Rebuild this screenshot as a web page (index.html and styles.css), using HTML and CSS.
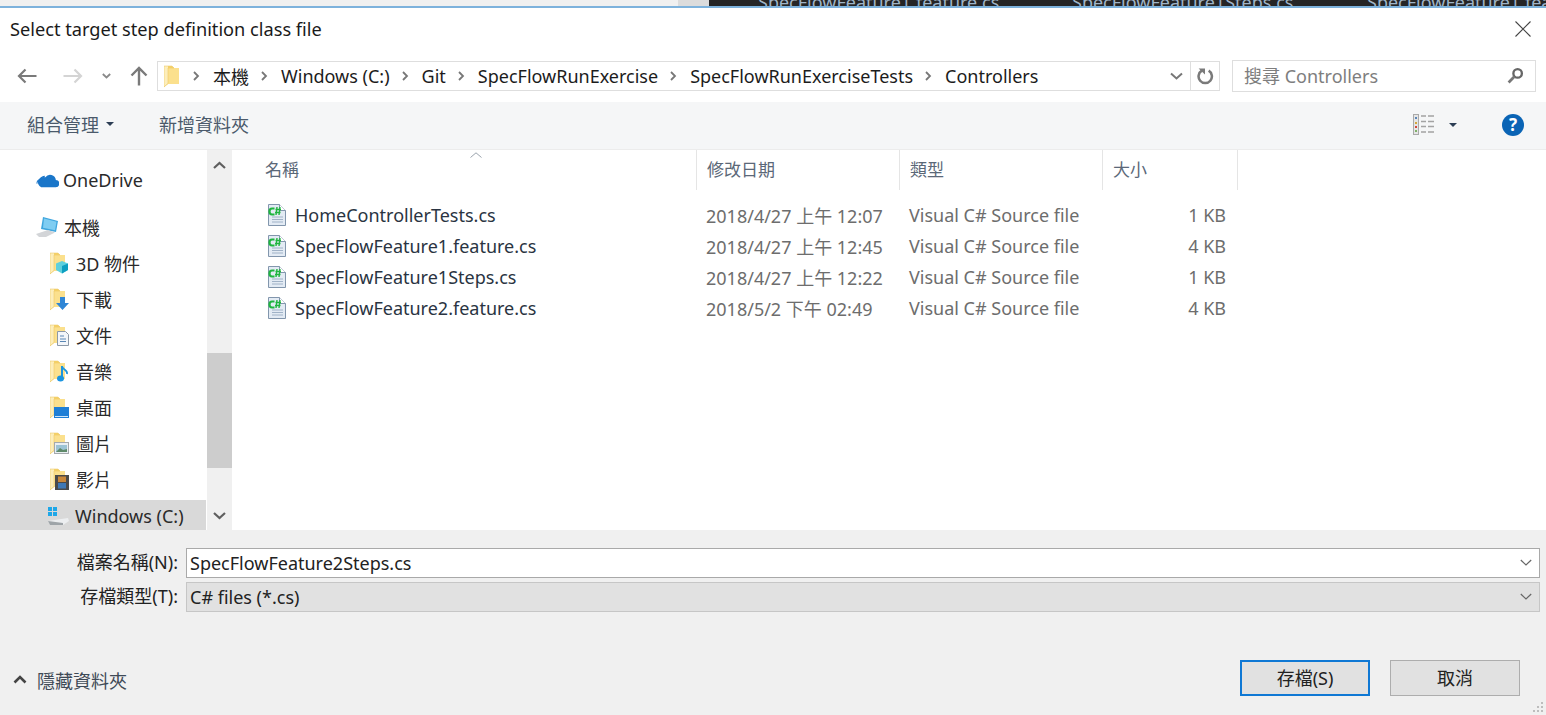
FILE: index.html
```html
<!DOCTYPE html>
<html lang="zh-Hant">
<head>
<meta charset="utf-8">
<title>Select target step definition class file</title>
<link rel="stylesheet" href="styles.css">
</head>
<body>
<svg class="defs" width="0" height="0" aria-hidden="true">
  <defs>
    <symbol id="folder" viewBox="0 0 15 23">
      <path d="M0 1h8l2 2h5v16H4l-4 3z" fill="#f6d36c"/>
      <path d="M4 3h11v16H4z" fill="#fbe08d"/>
      <path d="M0 1h4v17.500L0 22z" fill="#fdeebb"/>
      <path d="M0 1h8l2 2H4v15.500L0 22z" fill="none" stroke="#e9c25a" stroke-width=".5"/>
    </symbol>
    <symbol id="csfile" viewBox="0 0 20 24">
      <path d="M1.500 1.500h11l6 6v15h-17z" fill="#e3ebf4" stroke="#8296ad"/>
      <path d="M12.500 1.500v6h6" fill="#fff" stroke="#8296ad"/>
      <path d="M5 14h11M5 16.500h11M5 19h11" stroke="#a0b2c7"/>
      <path d="M7.500 5.500H5Q2.500 5.500 2.500 8.500T5 11.500h2.500" fill="none" stroke="#1fb53f" stroke-width="2.200"/>
      <path d="M10 4l-1 8M13 4l-1 8M8.500 6.500h5.500M8 9.500h5.500" stroke="#1fb53f" stroke-width="1.400"/>
    </symbol>
  </defs>
</svg>
<div class="window">
  <div class="strip">
    <div class="strip-light"></div>
    <div class="strip-mid"></div>
    <div class="strip-dark">
      <span class="tab tab-a">SpecFlowFeature1.feature.cs</span>
      <span class="tab tab-b">SpecFlowFeature1Steps.cs</span>
      <span class="tab tab-c">SpecFlowFeature1.feature.cs</span>
    </div>
  </div>

  <header class="titlebar">
    <span class="title">Select target step definition class file</span>
    <svg class="close" width="16" height="16" viewBox="0 0 16 16"><path d="M.5.500l15 15M15.500.500l-15 15" stroke="#444" stroke-width="1.100" fill="none"/></svg>
  </header>

  <nav class="navbar">
    <div class="nav-buttons">
      <svg class="nav-back" width="20" height="16" viewBox="0 0 20 16"><path d="M1.500 8h18M8.500 1.500L2 8l6.500 6.500" stroke="#7a7a7a" stroke-width="2.200" fill="none"/></svg>
      <svg class="nav-fwd" width="20" height="16" viewBox="0 0 20 16"><path d="M18.500 8H.5M11.500 1.500L18 8l-6.500 6.500" stroke="#d4d4d4" stroke-width="2.200" fill="none"/></svg>
      <svg class="nav-recent" width="9" height="6" viewBox="0 0 9 6"><path d="M.8 1l3.700 3.500L8.200 1" stroke="#8a8a8a" stroke-width="1.800" fill="none"/></svg>
      <svg class="nav-up" width="18" height="20" viewBox="0 0 18 20"><path d="M9 19.500V2M1.500 9.500L9 2l7.500 7.500" stroke="#7a7a7a" stroke-width="2.400" fill="none"/></svg>
    </div>
    <div class="address">
      <svg class="addr-folder" width="15" height="23"><use href="#folder"/></svg>
      <svg class="crumb-sep" width="7" height="10" viewBox="0 0 7 10"><path d="M1 1l4 4-4 4" stroke="#777" stroke-width="1.800" fill="none"/></svg>
      <span class="crumb">本機</span>
      <svg class="crumb-sep" width="7" height="10" viewBox="0 0 7 10"><path d="M1 1l4 4-4 4" stroke="#777" stroke-width="1.800" fill="none"/></svg>
      <span class="crumb">Windows (C:)</span>
      <svg class="crumb-sep" width="7" height="10" viewBox="0 0 7 10"><path d="M1 1l4 4-4 4" stroke="#777" stroke-width="1.800" fill="none"/></svg>
      <span class="crumb">Git</span>
      <svg class="crumb-sep" width="7" height="10" viewBox="0 0 7 10"><path d="M1 1l4 4-4 4" stroke="#777" stroke-width="1.800" fill="none"/></svg>
      <span class="crumb">SpecFlowRunExercise</span>
      <svg class="crumb-sep" width="7" height="10" viewBox="0 0 7 10"><path d="M1 1l4 4-4 4" stroke="#777" stroke-width="1.800" fill="none"/></svg>
      <span class="crumb">SpecFlowRunExerciseTests</span>
      <svg class="crumb-sep" width="7" height="10" viewBox="0 0 7 10"><path d="M1 1l4 4-4 4" stroke="#777" stroke-width="1.800" fill="none"/></svg>
      <span class="crumb">Controllers</span>
      <svg class="addr-drop" width="13" height="8" viewBox="0 0 13 8"><path d="M1 1.500l5.500 5 5.500-5" stroke="#777" stroke-width="2" fill="none"/></svg>
      <div class="addr-refresh">
        <svg width="17" height="18" viewBox="0 0 16 17"><path d="M4.500 3.500A6.300 6.300 0 1 0 11 3.500" stroke="#7a7a7a" stroke-width="2.400" fill="none"/><path d="M1.500 1.500h6v5.500z" fill="#7a7a7a"/></svg>
      </div>
    </div>
    <div class="search">
      <span class="search-text">搜尋 Controllers</span>
      <svg width="17" height="17" viewBox="0 0 16 16"><circle cx="10" cy="6" r="4" stroke="#666" stroke-width="2.200" fill="none"/><path d="M7 9l-5.500 5.500" stroke="#777" stroke-width="2.600"/></svg>
    </div>
  </nav>

  <div class="toolbar">
    <span class="tool">組合管理<i class="caret"></i></span>
    <span class="tool tool-new">新增資料夾</span>
    <span class="spacer"></span>
    <svg class="view-icon" width="22" height="21" viewBox="0 0 22 21">
      <rect x=".5" y=".5" width="5" height="20" fill="#e6e6e6" stroke="#a9a9a9"/>
      <rect x="2" y="3" width="2" height="2" fill="#5c86b8"/><rect x="2" y="8" width="2" height="2" fill="#d3a63c"/><rect x="2" y="12" width="2" height="2" fill="#d2453c"/><rect x="2" y="16" width="2" height="2" fill="#7fb069"/>
      <path d="M8 2h5M15 2h6M8 7.500h5M15 7.500h6M8 12.500h5M15 12.500h6M8 18h5M15 18h6" stroke="#a3a3a3" stroke-width="1.400"/>
    </svg>
    <i class="caret caret-view"></i>
    <span class="help">?</span>
  </div>

  <main class="body">
    <aside class="sidebar">
      <ul class="tree">
        <li class="node node-top">
          <svg width="23" height="15" viewBox="0 0 22 14"><path d="M5 13.500h13.500a3.500 3.500 0 0 0 .5-7A5.500 5.500 0 0 0 9 4 4.500 4.500 0 0 0 5 13.500z" fill="#1a76c9"/><path d="M1 10a3.500 3.500 0 0 1 3-4 5 5 0 0 1 4.500-3" stroke="#1a76c9" fill="none"/></svg>
          <span>OneDrive</span>
        </li>
        <li class="node node-pc">
          <svg width="24" height="22" viewBox="0 0 24 22"><path d="M8 1l15 4-2 11-15-3z" fill="#3fa6de"/><path d="M9 2.500l12.500 3.300-1.500 8.500-12-2.500z" fill="#7fcdf2"/><path d="M1 18l12-4 7 2.500-9 4.500H4z" fill="#d3d5d8"/></svg>
          <span>本機</span>
        </li>
        <li class="node node-sub">
          <span class="ficon"><svg width="15" height="23"><use href="#folder"/></svg>
            <svg class="badge" width="14" height="14" viewBox="0 0 14 14"><path d="M7 1l6 2.500V10l-6 3.500L1 10V3.500z" fill="#5fd0dd"/><path d="M7 6v7.500l6-3.500V3.500z" fill="#0e9fc1"/></svg></span>
          <span>3D 物件</span>
        </li>
        <li class="node node-sub">
          <span class="ficon"><svg width="15" height="23"><use href="#folder"/></svg>
            <svg class="badge" width="13" height="14" viewBox="0 0 13 14"><path d="M4 1h5v6h4l-6.500 7L0 7h4z" fill="#2f86d6"/></svg></span>
          <span>下載</span>
        </li>
        <li class="node node-sub">
          <span class="ficon"><svg width="15" height="23"><use href="#folder"/></svg>
            <svg class="badge" width="12" height="15" viewBox="0 0 12 15"><path d="M.5.500h8l3 3v11H.5z" fill="#f3f6fa" stroke="#8c99a8"/><path d="M3 5h4M3 8h6M3 10.500h6" stroke="#5a87b5"/></svg></span>
          <span>文件</span>
        </li>
        <li class="node node-sub">
          <span class="ficon"><svg width="15" height="23"><use href="#folder"/></svg>
            <svg class="badge" width="12" height="17" viewBox="0 0 12 17"><path d="M5 1v12" stroke="#1b95e0" stroke-width="2"/><path d="M5 1c0 4 6 3 5 8" stroke="#1b95e0" stroke-width="1.800" fill="none"/><ellipse cx="3.500" cy="13.500" rx="3.500" ry="3" fill="#1b95e0"/></svg></span>
          <span>音樂</span>
        </li>
        <li class="node node-sub">
          <span class="ficon"><svg width="15" height="23"><use href="#folder"/></svg>
            <svg class="badge" width="15" height="11" viewBox="0 0 15 11"><rect width="15" height="11" fill="#1f7fd6"/><rect x="1" y="9" width="13" height="1" fill="#cfe6f8"/></svg></span>
          <span>桌面</span>
        </li>
        <li class="node node-sub">
          <span class="ficon"><svg width="15" height="23"><use href="#folder"/></svg>
            <svg class="badge" width="15" height="12" viewBox="0 0 15 12"><rect x=".5" y=".5" width="14" height="11" fill="#e9eef2" stroke="#a4a9ad"/><rect x="2" y="3" width="11" height="7" fill="#9cc3d5"/><path d="M2 10l4-4 3 2 4-1v3z" fill="#5f8a6a"/></svg></span>
          <span>圖片</span>
        </li>
        <li class="node node-sub">
          <span class="ficon"><svg width="15" height="23"><use href="#folder"/></svg>
            <svg class="badge" width="14" height="15" viewBox="0 0 14 15"><rect width="14" height="15" fill="#4a4a4a"/><rect x="3" y="1.500" width="8" height="5.500" fill="#c9873a"/><rect x="3" y="8" width="8" height="5.500" fill="#3f78b5"/></svg></span>
          <span>影片</span>
        </li>
        <li class="node node-drive">
          <svg width="23" height="20" viewBox="0 0 23 20"><path d="M1 15l20-3 1 3-6 4H3z" fill="#eceef0"/><path d="M1 15l2 4h13v-2z" fill="#9ea4a8"/><path d="M1 1h4v4H1zM6 1h4v4H6zM1 6h4v4H1zM6 6h4v4H6z" fill="#1ea7e8"/></svg>
          <span>Windows (C:)</span>
        </li>
      </ul>
      <div class="scrollbar">
        <svg class="sb-btn sb-up" width="13" height="8" viewBox="0 0 13 8"><path d="M1 7l5.500-5 5.500 5" stroke="#5f5f5f" stroke-width="2.200" fill="none"/></svg>
        <div class="sb-thumb"></div>
        <svg class="sb-btn sb-down" width="13" height="8" viewBox="0 0 13 8"><path d="M1 1l5.500 5 5.500-5" stroke="#5f5f5f" stroke-width="2.200" fill="none"/></svg>
      </div>
    </aside>

    <section class="files">
      <div class="file-grid">
        <div class="head head-name">名稱<svg class="sort" width="12" height="6" viewBox="0 0 12 6"><path d="M.5 5.500L6 .8l5.500 4.700" stroke="#9aa3ad" fill="none"/></svg></div>
        <div class="head">修改日期</div>
        <div class="head">類型</div>
        <div class="head">大小</div>

        <div class="cell name"><svg width="20" height="24"><use href="#csfile"/></svg>HomeControllerTests.cs</div>
        <div class="cell meta">2018/4/27 上午 12:07</div>
        <div class="cell meta">Visual C# Source file</div>
        <div class="cell meta size">1 KB</div>

        <div class="cell name"><svg width="20" height="24"><use href="#csfile"/></svg>SpecFlowFeature1.feature.cs</div>
        <div class="cell meta">2018/4/27 上午 12:45</div>
        <div class="cell meta">Visual C# Source file</div>
        <div class="cell meta size">4 KB</div>

        <div class="cell name"><svg width="20" height="24"><use href="#csfile"/></svg>SpecFlowFeature1Steps.cs</div>
        <div class="cell meta">2018/4/27 上午 12:22</div>
        <div class="cell meta">Visual C# Source file</div>
        <div class="cell meta size">1 KB</div>

        <div class="cell name"><svg width="20" height="24"><use href="#csfile"/></svg>SpecFlowFeature2.feature.cs</div>
        <div class="cell meta">2018/5/2 下午 02:49</div>
        <div class="cell meta">Visual C# Source file</div>
        <div class="cell meta size">4 KB</div>
      </div>
    </section>
  </main>

  <footer class="footer">
    <div class="form">
      <label class="label">檔案名稱(N):</label>
      <div class="field field-input"><span>SpecFlowFeature2Steps.cs</span><svg width="12" height="7" viewBox="0 0 12 7"><path d="M.8 1l5.200 5 5.200-5" stroke="#666" stroke-width="1.200" fill="none"/></svg></div>
      <label class="label">存檔類型(T):</label>
      <div class="field field-select"><span>C# files (*.cs)</span><svg width="12" height="7" viewBox="0 0 12 7"><path d="M.8 1l5.200 5 5.200-5" stroke="#666" stroke-width="1.200" fill="none"/></svg></div>
    </div>
    <div class="actions">
      <span class="toggle"><svg width="14" height="9" viewBox="0 0 14 9"><path d="M1.500 7.500L7 2l5.500 5.500" stroke="#444" stroke-width="2.600" fill="none"/></svg>隱藏資料夾</span>
      <span class="spacer"></span>
      <button class="btn btn-primary" type="button">存檔(S)</button>
      <button class="btn" type="button">取消</button>
    </div>
    <svg class="grip" width="12" height="12" viewBox="0 0 12 12"><path d="M9 1h2v2H9zM9 5h2v2H9zM5 5h2v2H5zM9 9h2v2H9zM5 9h2v2H5zM1 9h2v2H1z" fill="#bdbdbd"/></svg>
  </footer>
</div>
</body>
</html>
```
FILE: styles.css
```css
* { box-sizing: border-box; }
html, body { margin: 0; padding: 0; }
body {
  width: 1546px;
  height: 715px;
  overflow: hidden;
  background: #fff;
  font-family: "Noto Sans", "Noto Sans CJK TC", sans-serif;
  font-size: 18px;
  color: #222;
}
.defs { position: absolute; }
.window { display: flex; flex-direction: column; height: 715px; overflow: hidden; }
.spacer { flex: 1; }

/* strip of the window behind */
.strip { display: flex; flex: none; height: 8px; border-bottom: 2px solid #7db2dc; overflow: hidden; }
.strip-light { width: 678px; background: #f0f0f0; }
.strip-mid { width: 31px; background: #dcdcdc; }
.strip-dark { flex: 1; background: #252526; display: flex; align-items: flex-end; overflow: hidden; white-space: nowrap; }
.tab { font-size: 18px; line-height: 20px; color: #9fb4c8; margin-bottom: -6px; flex: none; }
.tab-a { margin-left: 49px; width: 314px; }
.tab-b { width: 295px; }

/* title */
.titlebar { flex: none; height: 42px; display: flex; align-items: center; justify-content: space-between; padding: 0 15px 0 10px; }
.title { font-size: 18.2px; color: #1a1a1a; }

/* navigation */
.navbar { flex: none; height: 52px; display: flex; align-items: center; padding-right: 10px; }
.nav-buttons { width: 157px; flex: none; display: flex; align-items: center; padding-left: 17px; }
.nav-fwd { margin-left: 26px; }
.nav-recent { margin-left: 19px; }
.nav-up { margin-left: 19px; }
.address { width: 1063px; height: 30px; flex: none; display: flex; align-items: center; border: 1px solid #dedede; padding-left: 6px; }
.addr-folder { margin-right: 14px; }
.crumb { font-size: 18px; color: #1c1c1c; margin: 0 12px 0 13px; white-space: nowrap; }
.addr-drop { margin-left: auto; margin-right: 7px; }
.addr-refresh { width: 29px; height: 28px; border-left: 1px solid #dedede; display: flex; align-items: center; justify-content: center; }
.search { width: 304px; height: 32px; margin-left: 12px; flex: none; display: flex; align-items: center; justify-content: space-between; border: 1px solid #dedede; padding: 0 11px 2px; }
.search-text { color: #7e7e7e; font-size: 18px; }

/* toolbar */
.toolbar { flex: none; height: 48px; background: #f5f6f7; border-bottom: 1px solid #ececec; display: flex; align-items: center; padding: 0 22px 2px 27px; }
.tool { font-size: 18px; color: #4b5a6b; display: flex; align-items: center; padding-bottom: 2px; }
.tool-new { margin-left: 45px; }
.caret { display: block; width: 0; height: 0; border: 4px solid transparent; border-top-color: #2c3e55; border-bottom-width: 0; margin-left: 7px; }
.view-icon { margin-right: 14px; }
.caret-view { margin: 0 45px 0 0; }
.help { width: 22px; height: 22px; border-radius: 50%; background: #0a64b5; color: #fff; font-size: 17px; font-weight: 700; line-height: 22px; text-align: center; }

/* body */
.body { flex: none; height: 380px; display: flex; overflow: hidden; background: #fff; }
.sidebar { width: 232px; flex: none; display: flex; }
.tree { list-style: none; margin: 0; padding: 11px 0 0; width: 207px; flex: none; }
.node { display: flex; align-items: center; height: 36px; font-size: 18px; color: #2a2a2a; white-space: nowrap; }
.node-top { padding: 2px 0 0 36px; gap: 4px; margin-bottom: 12px; }
.node-pc { padding-left: 35px; gap: 5px; }
.node-sub { padding-left: 50px; gap: 10px; }
.node-drive { height: 32px; margin-top: 3px; padding-left: 47px; gap: 5px; background: #d9d9d9; width: 206px; }
.ficon { display: flex; position: relative; width: 16px; height: 23px; }
.badge { position: absolute; right: -3px; bottom: 1px; }
.scrollbar { width: 25px; flex: none; background: #f0f0f0; display: flex; flex-direction: column; align-items: center; }
.sb-btn { flex: none; }
.sb-up { margin-top: 11px; }
.sb-thumb { width: 100%; height: 115px; background: #cdcdcd; margin-top: 184px; }
.sb-down { margin-top: 44px; }

.files { flex: 1; padding-left: 2px; }
.file-grid { display: grid; grid-template-columns: 463px 203px 203px 135px; grid-template-rows: 49px repeat(4, 31px); }
.head { position: relative; height: 40px; padding-left: 10px; line-height: 40px; font-size: 17px; color: #5b6878; border-right: 1px solid #e5e5e5; }
.head-name { padding-left: 31px; }
.sort { position: absolute; left: 236px; top: 2px; }
.cell { height: 31px; display: flex; align-items: center; font-size: 18px; white-space: nowrap; }
.name { padding-left: 33px; gap: 8px; color: #2a3442; }
.meta { padding-left: 9px; color: #6d6d6d; }
.size { justify-content: flex-end; padding-right: 12px; }

/* footer */
.footer { flex: 1; position: relative; background: #f0f0f0; padding: 18px 6px 0 0; display: flex; flex-direction: column; }
.form { display: grid; grid-template-columns: 178px 1fr; column-gap: 8px; row-gap: 4px; }
.label { text-align: right; font-size: 18px; line-height: 29px; color: #222; white-space: nowrap; }
.field { height: 30px; display: flex; align-items: center; justify-content: space-between; padding: 0 7px 1px 3px; font-size: 18px; border: 1px solid #a9a9a9; color: #222; }
.field-input { background: #fff; }
.field-select { background: #e1e1e1; border-color: #c6c6c6; }
.actions { display: flex; align-items: center; margin-top: 48px; padding: 0 20px 0 13px; }
.toggle { display: flex; align-items: center; gap: 10px; font-size: 18px; color: #3f4a57; margin-top: 3px; }
.btn { width: 130px; height: 36px; margin-left: 20px; background: #e1e1e1; border: 1px solid #adadad; font: inherit; font-size: 18px; color: #222; padding: 0 0 3px; }
.btn-primary { border: 2px solid #0f78d4; }
.grip { position: absolute; right: 2px; bottom: 2px; }
```
